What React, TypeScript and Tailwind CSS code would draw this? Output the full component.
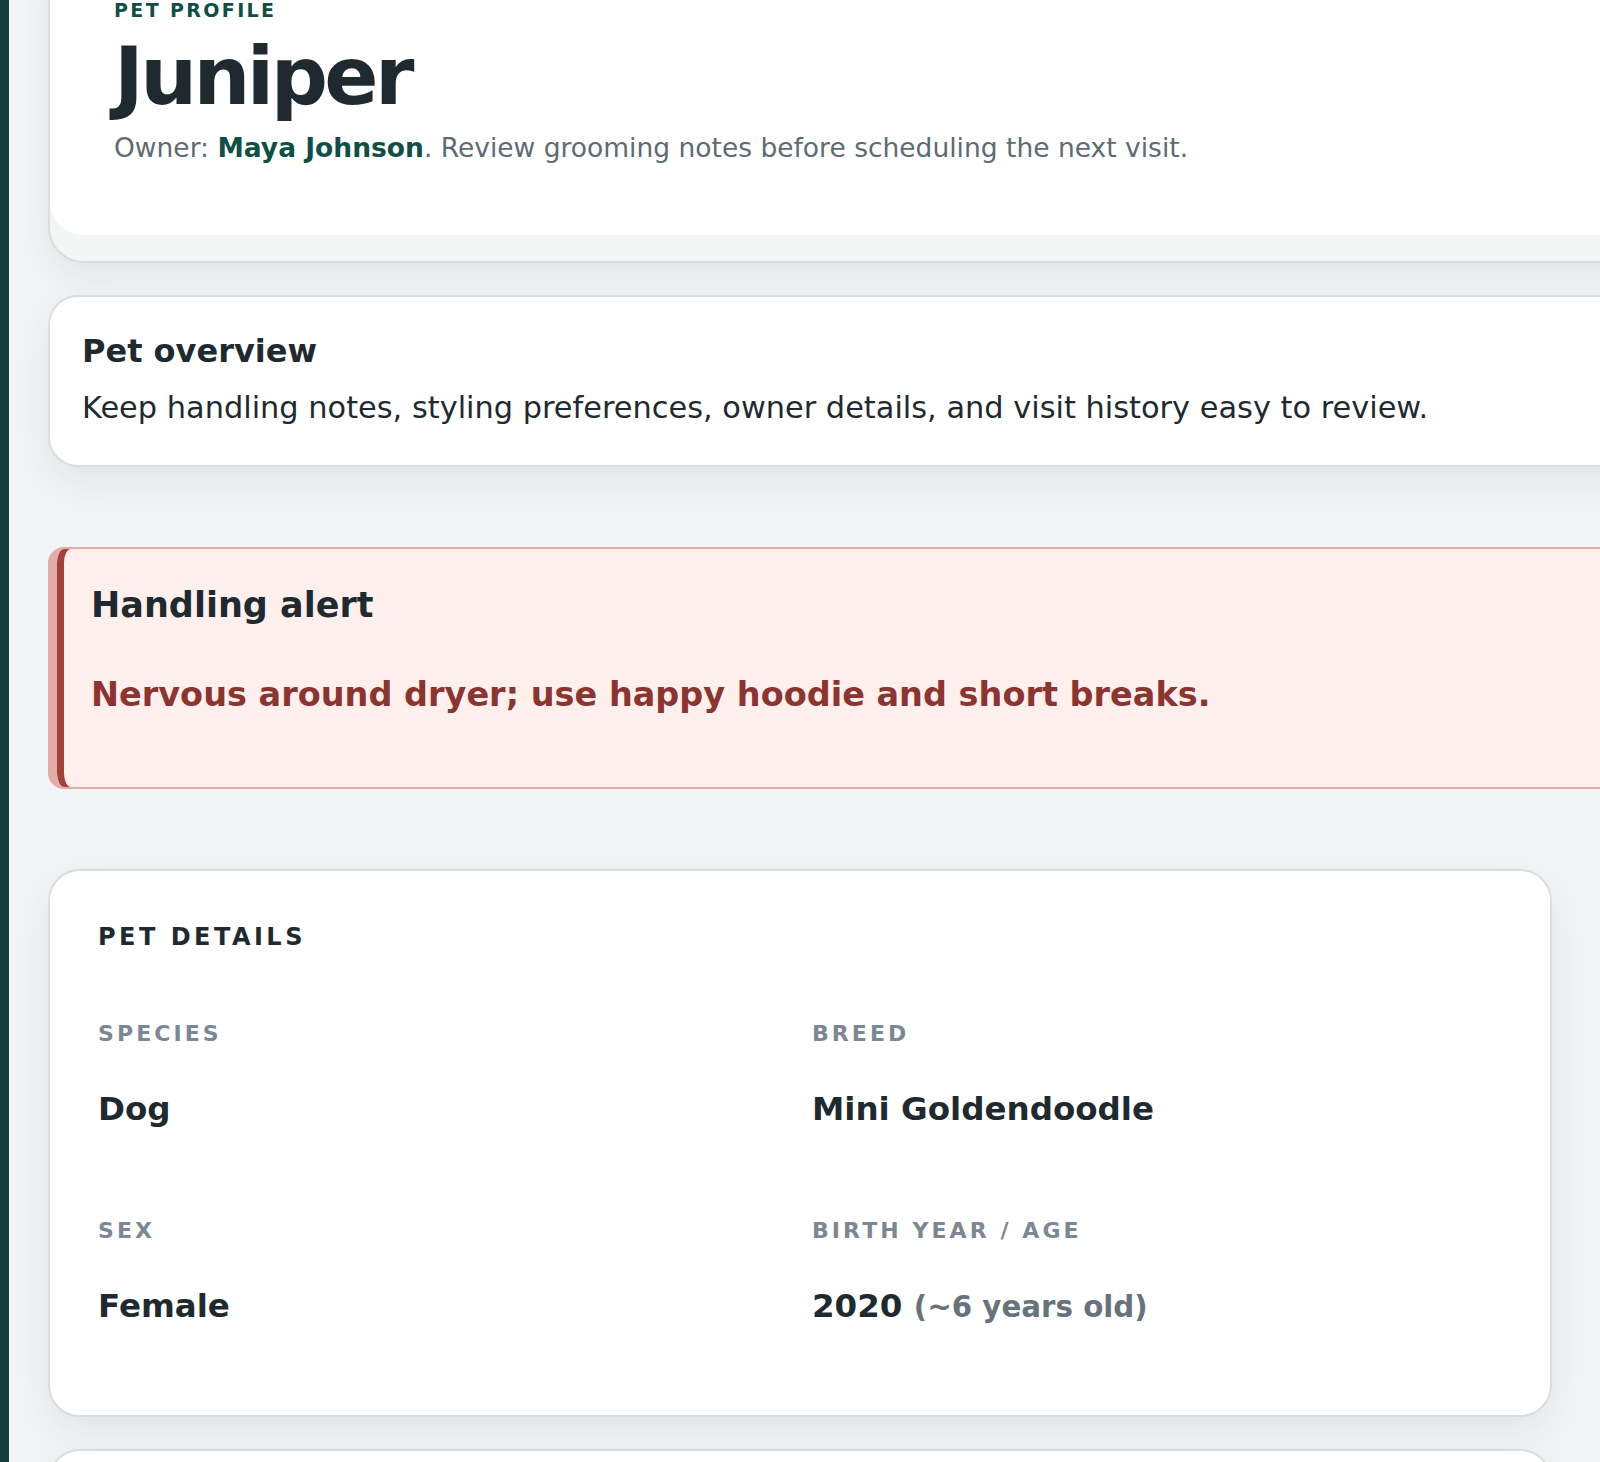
import { ReactNode } from 'react';

type Field = {
  label: string;
  value: ReactNode;
};

const fields: Field[] = [
  { label: 'Species', value: 'Dog' },
  { label: 'Breed', value: 'Mini Goldendoodle' },
  { label: 'Sex', value: 'Female' },
  {
    label: 'Birth year / Age',
    value: (
      <>
        2020 <span className="text-[29.3px] text-[#66737b]">(~6 years old)</span>
      </>
    ),
  },
];

function DetailField({ label, value }: Field) {
  return (
    <div className="flex flex-col">
      <span className="text-[22px] leading-[28px] font-bold uppercase tracking-[0.14em] text-[#7c8794]">
        {label}
      </span>
      <span className="mt-[41px] text-[32.5px] leading-[40px] font-bold text-[#1f2a30]">{value}</span>
    </div>
  );
}

export default function App() {
  return (
    <div className="flex h-screen overflow-hidden bg-[#f3f4f6] font-['DejaVu_Sans',sans-serif] text-[#1f2a30]">
      <aside className="w-[9px] shrink-0 bg-[#143d3b]" />

      <main className="flex min-w-0 flex-1 flex-col gap-[32px] pl-[39px]">
        {/* profile header */}
        <section className="-mt-[68px] w-[1640px] shrink-0 rounded-[36px] border-2 border-[#d9dedc] bg-white px-[64px] pt-[64px] pb-[93px] shadow-[inset_0_-26px_0_#f4f5f5,0_14px_36px_rgba(20,45,50,0.08)]">
          <p className="text-[19px] leading-[24px] font-bold uppercase tracking-[0.125em] text-[#0f4f46]">
            Pet profile
          </p>
          <h1 className="mt-[15px] text-[80px] leading-[80px] font-bold tracking-[-0.045em] text-[#1f2a30]">
            Juniper
          </h1>
          <p className="mt-[11px] text-[26.5px] leading-[40px] text-[#5d6b73]">
            Owner: <span className="font-bold text-[#0f4f46]">Maya Johnson</span>. Review grooming notes before
            scheduling the next visit.
          </p>
        </section>

        {/* overview */}
        <section className="w-[1640px] shrink-0 rounded-[30px] border-2 border-[#d9dedc] bg-white px-[32px] pt-[34px] pb-[35px] shadow-[0_16px_40px_rgba(20,45,50,0.08)]">
          <h2 className="text-[32px] leading-[40px] font-bold">Pet overview</h2>
          <p className="mt-[14px] text-[30.4px] leading-[45px]">
            Keep handling notes, styling preferences, owner details, and visit history easy to review.
          </p>
        </section>

        {/* handling alert */}
        <section className="my-[48px] w-[1640px] shrink-0 rounded-[16px] border-2 border-l-[9px] border-[#e3aca6] bg-[#fff0ee] pl-[34px] pt-[34px] pb-[70px] shadow-[inset_7px_0_0_#a3403a]">
          <h2 className="text-[35px] leading-[44px] font-bold">Handling alert</h2>
          <p className="mt-[46px] text-[33.5px] leading-[44px] font-bold text-[#8b3430]">
            Nervous around dryer; use happy hoodie and short breaks.
          </p>
        </section>

        {/* details */}
        <section className="w-[1504px] shrink-0 rounded-[32px] border-2 border-[#d9dedc] bg-white px-[48px] pt-[50px] pb-[88px] shadow-[0_16px_40px_rgba(20,45,50,0.08)]">
          <h2 className="text-[24px] leading-[32px] font-bold uppercase tracking-[0.145em]">Pet details</h2>
          <div className="mt-[67px] grid grid-cols-2 gap-x-[24px] gap-y-[88px]">
            {fields.map((f) => (
              <DetailField key={f.label} label={f.label} value={f.value} />
            ))}
          </div>
        </section>

        {/* grooming notes, mostly below the fold */}
        <section className="w-[1504px] shrink-0 rounded-[32px] border-2 border-[#d9dedc] bg-white px-[48px] pt-[48px] pb-[84px] shadow-[0_16px_40px_rgba(20,45,50,0.08)]">
          <h2 className="text-[24px] leading-[32px] font-bold uppercase tracking-[0.145em]">Grooming notes</h2>
          <p className="mt-[24px] text-[30px] leading-[45px]">Teddy face, 1/2 inch body, rounded feet.</p>
        </section>
      </main>
    </div>
  );
}
